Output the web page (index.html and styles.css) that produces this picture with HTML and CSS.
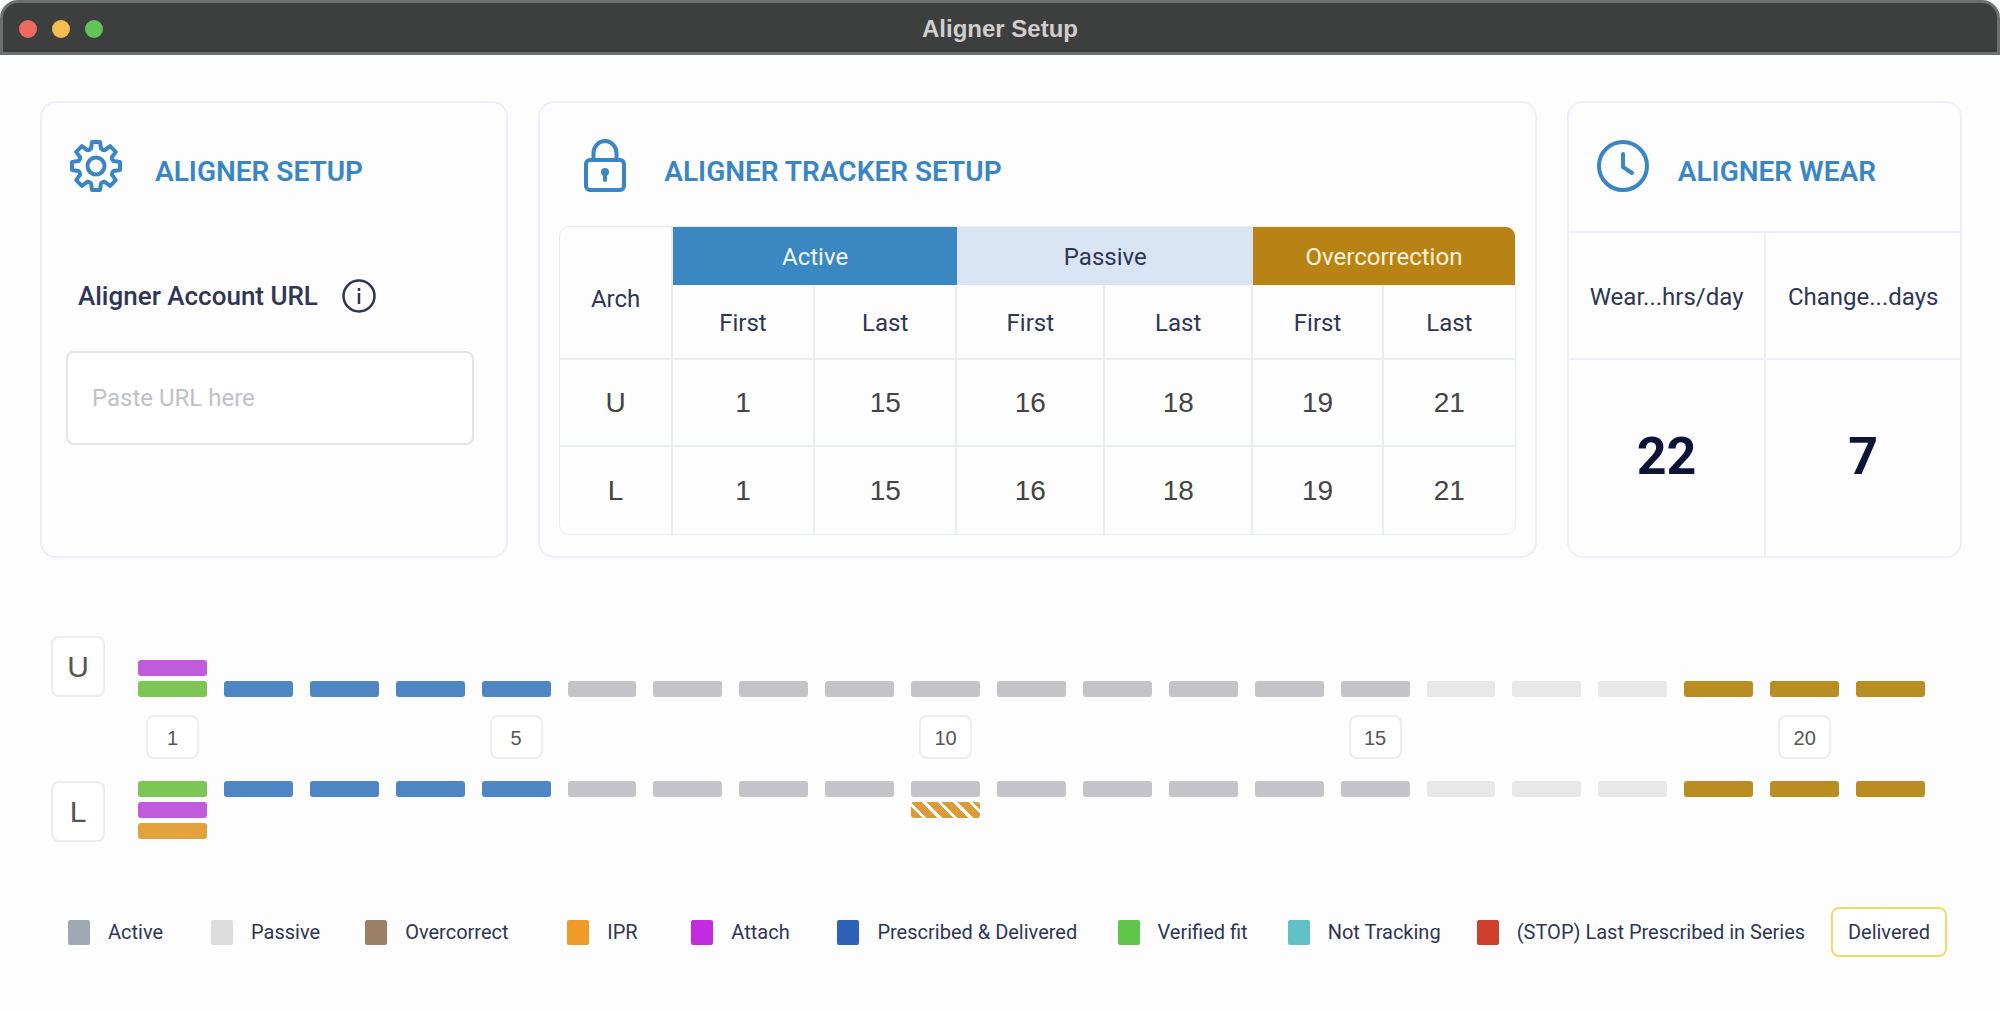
FILE: index.html
```html
<!doctype html>
<html lang="en">

<head>
    <meta charset="utf-8" />
    <meta name="viewport" content="width=device-width, initial-scale=1">
    <title>Aligner Setup</title>
    <link rel="stylesheet" href="styles.css">
</head>

<body>
    <header class="titlebar">
        <div class="window-buttons">
            <button type="button" class="dot red" aria-label="Close"></button>
            <button type="button" class="dot yellow" aria-label="Minimize"></button>
            <button type="button" class="dot green" aria-label="Zoom"></button>
        </div>
        <h1>Aligner Setup</h1>
    </header>

    <main>
        <div class="cards">
            <section class="card">
                <div class="card-header">
                    <svg class="card-icon" viewBox="-25 -26 50 52" aria-hidden="true">
                        <path d="M-4-24L4-24L5-17.500Q7-15.500 8.800-15.900L14.100-19.800L19.800-14.100L15.900-8.800Q15.500-7 17.500-5L24-4L24 4L17.500 5Q15.500 7 15.900 8.800L19.800 14.100L14.100 19.800L8.800 15.900Q7 15.500 5 17.500L4 24L-4 24L-5 17.500Q-7 15.500-8.800 15.900L-14.100 19.800L-19.800 14.100L-15.900 8.800Q-15.500 7-17.500 5L-24 4L-24-4L-17.500-5Q-15.500-7-15.900-8.800L-19.800-14.100L-14.100-19.800L-8.800-15.900Q-7-15.500-5-17.500Z" />
                        <circle r="8.500" />
                    </svg>
                    <h2>ALIGNER SETUP</h2>
                </div>
                <div class="url-field">
                    <div class="label-row">
                        <label for="accountUrl">Aligner Account URL</label>
                        <button type="button" class="info-btn" aria-label="About the account URL">
                            <svg viewBox="0 0 34 34" aria-hidden="true">
                                <circle cx="17" cy="17" r="15.5" />
                                <path d="M17 14v11M17 9v3" />
                            </svg>
                        </button>
                    </div>
                    <input type="url" id="accountUrl" name="accountUrl" placeholder="Paste URL here">
                </div>
            </section>

            <section class="card">
                <div class="card-header tracker-header">
                    <svg class="card-icon" viewBox="0 0 50 52" aria-hidden="true">
                        <rect x="6" y="20" width="38" height="30" rx="4" />
                        <path d="M13.500 20v-7a11.500 12 0 0 1 23 0v7" />
                        <circle class="solid" cx="25" cy="32" r="4" />
                        <path d="M25 33v7" />
                    </svg>
                    <h2>ALIGNER TRACKER SETUP</h2>
                </div>
                <table class="tracker">
                    <colgroup>
                        <col class="col-arch">
                        <col class="col-active" span="2">
                        <col class="col-passive" span="2">
                        <col class="col-over" span="2">
                    </colgroup>
                    <thead>
                        <tr class="phases">
                            <th rowspan="2" class="arch">Arch</th>
                            <th colspan="2" class="phase active">Active</th>
                            <th colspan="2" class="phase passive">Passive</th>
                            <th colspan="2" class="phase over">Overcorrection</th>
                        </tr>
                        <tr class="ranges">
                            <th>First</th>
                            <th>Last</th>
                            <th>First</th>
                            <th>Last</th>
                            <th>First</th>
                            <th>Last</th>
                        </tr>
                    </thead>
                    <tbody>
                        <tr>
                            <th>U</th>
                            <td>1</td>
                            <td>15</td>
                            <td>16</td>
                            <td>18</td>
                            <td>19</td>
                            <td>21</td>
                        </tr>
                        <tr>
                            <th>L</th>
                            <td>1</td>
                            <td>15</td>
                            <td>16</td>
                            <td>18</td>
                            <td>19</td>
                            <td>21</td>
                        </tr>
                    </tbody>
                </table>
            </section>

            <section class="card wear-card">
                <div class="card-header wear-header">
                    <svg class="card-icon" viewBox="0 0 50 52" aria-hidden="true">
                        <circle cx="25" cy="26" r="24" />
                        <path d="M25 14v13l9 6" />
                    </svg>
                    <h2>ALIGNER WEAR</h2>
                </div>
                <dl class="wear">
                    <div>
                        <dt>Wear...hrs/day</dt>
                        <dd>22</dd>
                    </div>
                    <div>
                        <dt>Change...days</dt>
                        <dd>7</dd>
                    </div>
                </dl>
            </section>
        </div>

        <section class="timeline">
            <div class="arch-box">U</div>
            <div class="steps upper" id="upperSteps"></div>
            <div class="steps numbers" id="stepNumbers"></div>
            <div class="arch-box">L</div>
            <div class="steps" id="lowerSteps"></div>
        </section>

        <ul class="legend">
            <li><span class="swatch s-active"></span>Active</li>
            <li><span class="swatch s-passive"></span>Passive</li>
            <li><span class="swatch s-over"></span>Overcorrect</li>
            <li><span class="swatch s-ipr"></span>IPR</li>
            <li><span class="swatch s-attach"></span>Attach</li>
            <li><span class="swatch s-delivered"></span>Prescribed &amp; Delivered</li>
            <li><span class="swatch s-verified"></span>Verified fit</li>
            <li><span class="swatch s-not"></span>Not Tracking</li>
            <li><span class="swatch s-stop"></span>(STOP) Last Prescribed in Series</li>
            <li><button type="button" class="delivered-btn">Delivered</button></li>
        </ul>
    </main>

    <script>
        const total = 21;
        // extra bars stacked on a step, listed top to bottom
        const upper = { 1: ['attach', 'verified'] };
        const lower = { 1: ['verified', 'attach', 'ipr'], 10: ['active', 'ipr-planned'] };

        function phase(step) {
            if (step <= 5) return 'delivered';
            if (step <= 15) return 'active';
            if (step <= 18) return 'passive';
            return 'over';
        }

        function drawSteps(id, arch) {
            let row = document.getElementById(id);
            for (let i = 1; i <= total; i++) {
                let bars = arch[i] || [phase(i)];
                let step = document.createElement('div');
                step.className = 'step';
                step.innerHTML = bars.map(b => `<span class="bar ${b}"></span>`).join('');
                row.appendChild(step);
            }
        }

        drawSteps('upperSteps', upper);
        drawSteps('lowerSteps', lower);

        let numbers = document.getElementById('stepNumbers');
        for (let i = 1; i <= total; i++) {
            let cell = document.createElement('div');
            cell.className = 'step';
            if (i === 1 || i % 5 === 0) cell.innerHTML = `<span class="number">${i}</span>`;
            numbers.appendChild(cell);
        }
    </script>
</body>

</html>
```

FILE: styles.css
```css
* {
    box-sizing: border-box;
}

body {
    margin: 0;
    font-family: Roboto, "Liberation Sans", sans-serif;
    background-color: #fdfdfe;
    color: #2f3654;
}

h1,
h2 {
    margin: 0;
}

.titlebar {
    display: grid;
    grid-template-columns: 1fr auto 1fr;
    align-items: center;
    height: 55px;
    padding: 2px 16px 0;
    background: #3d3f3f;
    border: 3px solid #6e6f70;
    border-radius: 18px 18px 0 0;
}

.titlebar h1 {
    color: #d0cecd;
    font-family: "Liberation Sans", Arial, sans-serif;
    font-size: 24px;
}

.window-buttons {
    display: flex;
    gap: 15px;
}

.dot {
    width: 18px;
    height: 18px;
    padding: 0;
    border: none;
    border-radius: 50%;
}

.red {
    background: #ec6a5f;
}

.yellow {
    background: #f4bf50;
}

.green {
    background: #61c555;
}

main {
    padding: 46px 38px 0 40px;
}

/* Cards */
.cards {
    display: grid;
    grid-template-columns: 468fr 998fr 395fr;
    gap: 30px;
}

.card {
    border: 2px solid #eeeffb;
    border-radius: 16px;
    min-height: 457px;
}

.card-header {
    display: flex;
    align-items: center;
    gap: 34px;
    padding: 37px 29px 0;
}

.card-header h2 {
    padding-top: 12px;
    color: #3a86c4;
    font-size: 28px;
    font-weight: 600;
    line-height: 40px;
}

.card-icon {
    flex: none;
    width: 50px;
    height: 52px;
    fill: none;
    stroke: #3a86c4;
    stroke-width: 4;
    stroke-linecap: round;
    stroke-linejoin: round;
    overflow: visible;
}

.card-icon .solid {
    fill: #3a86c4;
    stroke: none;
}

.url-field {
    padding: 87px 32px 0 24px;
}

.label-row {
    display: flex;
    align-items: center;
    gap: 24px;
    padding-left: 12px;
    margin-bottom: 38px;
}

.label-row label {
    font-size: 26px;
    font-weight: 500;
}

.info-btn {
    width: 34px;
    height: 34px;
    padding: 0;
    border: none;
    background: none;
}

.info-btn svg {
    display: block;
    fill: none;
    stroke: #2f3654;
    stroke-width: 2.5;
}

.url-field input {
    width: 100%;
    height: 94px;
    padding: 0 24px;
    border: 2px solid #e3e4e6;
    border-radius: 8px;
    background: #fff;
    color: inherit;
    font: inherit;
    font-size: 24px;
}

.url-field input::placeholder {
    color: #c0c1c8;
}

/* Tracker table */
.tracker-header {
    padding-left: 40px;
}

.tracker {
    width: calc(100% - 38px);
    margin: 34px 19px 0;
    table-layout: fixed;
    border-collapse: separate;
    border-spacing: 0;
    border: 1px solid #ebeef0;
    border-radius: 10px;
    overflow: hidden;
}

.col-arch {
    width: 11.8%;
}

.col-active {
    width: 14.9%;
}

.col-passive {
    width: 15.5%;
}

.col-over {
    width: 13.7%;
}

.tracker th,
.tracker td {
    height: 87px;
    padding: 0;
    border-right: 2px solid #ebeef0;
    border-bottom: 2px solid #ebeef0;
    font-size: 24px;
    font-weight: 400;
    text-align: center;
}

.tracker tr > :last-child {
    border-right: none;
}

.tracker tbody tr:last-child > * {
    border-bottom: none;
}

.tracker .phases .phase {
    height: 58px;
    padding-top: 2px;
    border: none;
}

.tracker .ranges th {
    height: 75px;
    padding-top: 2px;
}

.tracker .arch {
    padding-top: 12px;
}

.phase.active {
    background: #3b87c1;
    color: #eef6fc;
}

.phase.passive {
    background: #d9e4f5;
}

.phase.over {
    background: #b98215;
    color: #fdf3dc;
}

.tracker tbody th,
.tracker tbody td {
    color: #444;
    font-family: "Liberation Sans", Arial, sans-serif;
    font-size: 28px;
}

/* Wear */
.wear-card {
    display: flex;
    flex-direction: column;
}

.wear-header {
    gap: 30px;
    padding-bottom: 39px;
    border-bottom: 2px solid #eeeffb;
}

.wear {
    flex: 1;
    display: grid;
    grid-template-columns: 1fr 1fr;
    margin: 0;
}

.wear > div {
    display: flex;
    flex-direction: column;
}

.wear > div + div {
    border-left: 2px solid #eeeffb;
}

.wear dt {
    padding: 49px 0 46px;
    border-bottom: 2px solid #eeeffb;
    font-size: 24px;
    line-height: 30px;
    text-align: center;
}

.wear dd {
    flex: 1;
    display: flex;
    align-items: center;
    justify-content: center;
    margin: 0;
    padding-bottom: 4px;
    color: #0c1437;
    font-size: 52px;
    font-weight: 700;
}

/* Timeline */
.timeline {
    display: grid;
    grid-template-columns: 54px 1fr;
    column-gap: 33px;
    padding: 78px 37px 0 11px;
}

.arch-box {
    display: flex;
    align-items: center;
    justify-content: center;
    height: 61px;
    border: 2px solid #ededef;
    border-radius: 8px;
    background: #fff;
    color: #555;
    font-family: "Liberation Sans", Arial, sans-serif;
    font-size: 30px;
}

.steps {
    display: grid;
    grid-template-columns: repeat(21, 1fr);
    column-gap: 17px;
}

.step {
    display: flex;
    flex-direction: column;
    gap: 5px;
}

.steps.upper .step {
    justify-content: flex-end;
}

.steps.numbers {
    grid-column: 2;
    padding: 18px 0 22px;
}

.steps.numbers .step {
    align-items: center;
}

.number {
    width: 53px;
    height: 44px;
    border: 2px solid #ededef;
    border-radius: 8px;
    background: #fff;
    color: #555;
    font-family: "Liberation Sans", Arial, sans-serif;
    font-size: 20px;
    line-height: 42px;
    text-align: center;
}

.bar {
    height: 16px;
    border-radius: 3px;
}

.bar.delivered {
    background: #4d86c2;
}

.bar.active {
    background: #c3c3c8;
}

.bar.passive {
    background: #e8e8e8;
}

.bar.over {
    background: #ba8d22;
}

.bar.attach {
    background: #c05bdb;
}

.bar.verified {
    background: #7cc656;
}

.bar.ipr {
    background: #e3a33c;
}

.bar.ipr-planned {
    background: repeating-linear-gradient(45deg, #dc9b38 0 8px, #fdfdfe 8px 11px);
}

/* Legend */
.legend {
    display: grid;
    grid-template-columns: 143fr 154fr 202fr 124fr 146fr 280fr 170fr 189fr 354fr 116fr;
    align-items: center;
    margin: 65px 0 0;
    padding: 0 15px 0 28px;
    list-style: none;
    font-size: 20px;
}

.legend li {
    display: flex;
    align-items: center;
    gap: 18px;
    white-space: nowrap;
}

.swatch {
    width: 22px;
    height: 25px;
    border-radius: 2px;
}

.s-active {
    background: #a0a8b4;
}

.s-passive {
    background: #dcdcde;
}

.s-over {
    background: #9c8067;
}

.s-ipr {
    background: #f09a28;
}

.s-attach {
    background: #c22be0;
}

.s-delivered {
    background: #2c63b8;
}

.s-verified {
    background: #5fc64a;
}

.s-not {
    background: #5fc1c3;
}

.s-stop {
    background: #cb3f2b;
}

.delivered-btn {
    width: 100%;
    height: 50px;
    padding: 0;
    border: 2px solid #f5d867;
    border-radius: 8px;
    background: #fff;
    color: inherit;
    font: inherit;
}
```
